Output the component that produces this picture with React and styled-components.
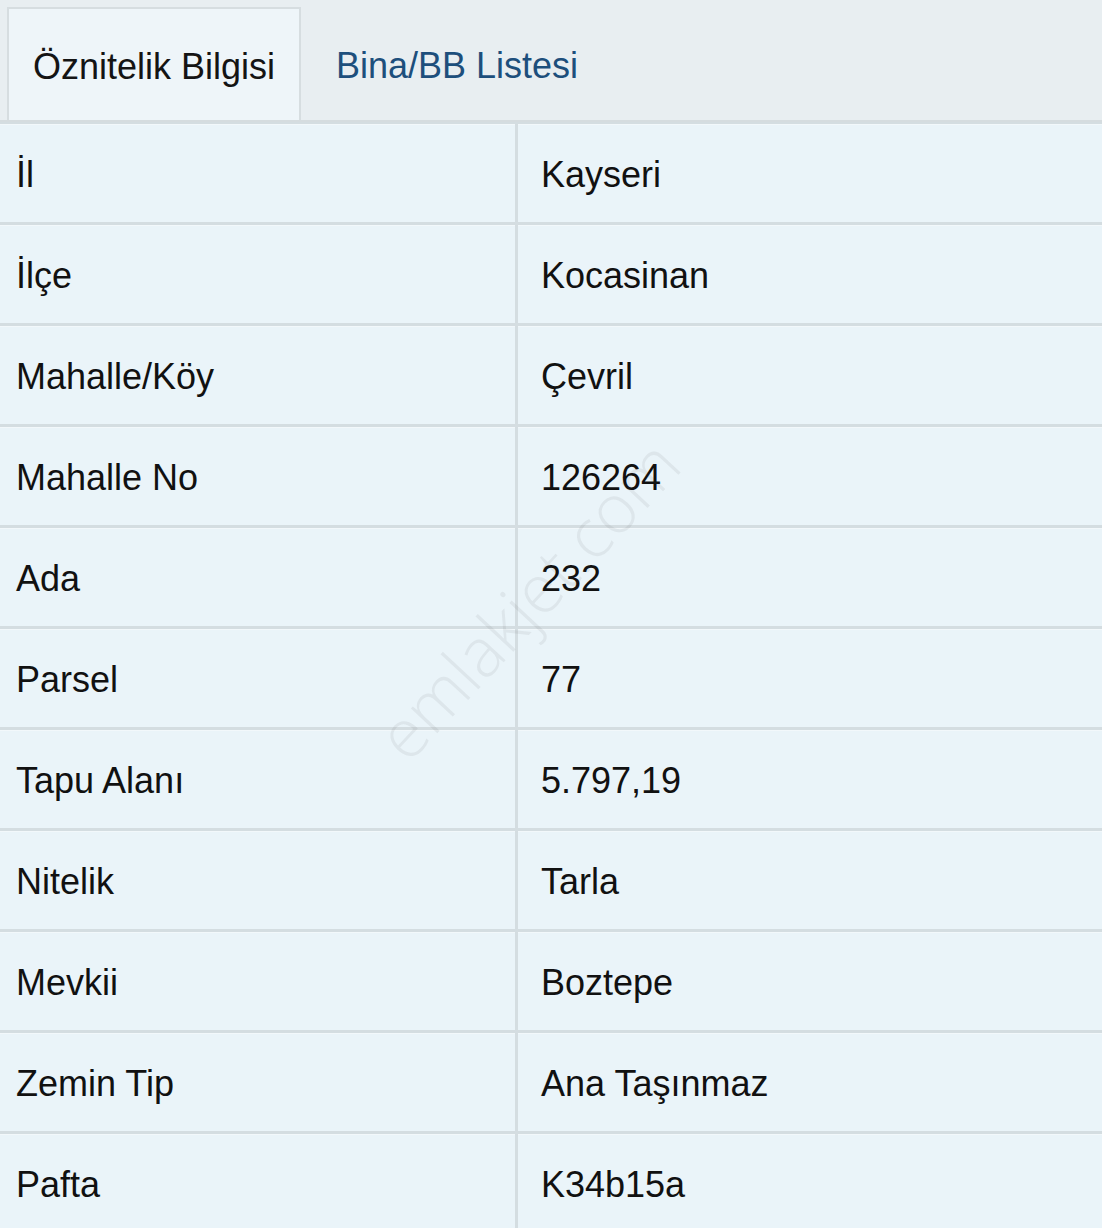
import React, { useState } from "react";
import styled, { createGlobalStyle } from "styled-components";

const GlobalStyle = createGlobalStyle`
	html, body {
		margin: 0;
		padding: 0;
		background: #eaf4f9;
	}
	body {
		font-family: "Liberation Sans", Arial, Helvetica, sans-serif;
	}
`

const Wrapper = styled.div`
	position: relative;
	width: 1102px;
	height: 1228px;
	overflow: hidden;
	background: #eaf4f9;
`

const TabBar = styled.div`
	display: flex;
	align-items: flex-end;
	height: 120px;
	padding-left: 7px;
	background: #e8eef1;
	border-bottom: 2px solid #d5dcdf;
`

const Tab = styled.button`
	display: flex;
	align-items: center;
	height: 113px;
	padding: ${props => props.active ? `4px 0 0 24px` : `4px 0 0 35px`};
	font-family: inherit;
	font-size: 36px;
	white-space: nowrap;
	color: ${props => props.active ? `#141414` : `#1d4f7c`};
	background: ${props => props.active ? `#eef5f9` : `transparent`};
	border: ${props => props.active ? `2px solid #d6dde0` : `none`};
	border-bottom: none;
	cursor: pointer;
	outline: none;
	box-sizing: border-box;
	width: ${props => props.active ? `294px` : `auto`};
`

const Table = styled.div`
	display: grid;
	grid-template-columns: 515px 1fr;
	gap: 3px;
	padding-top: 2px;
	background: #d4dde1;
`

const Cell = styled.div`
	display: flex;
	align-items: center;
	box-sizing: border-box;
	height: 98px;
	padding: 4px 0 0 ${props => props.value ? `23px` : `16px`};
	background: #eaf4f9;
	font-size: 36px;
	color: #111;
	box-shadow: inset 0 1px 0 #f2f8fb;
`

const Watermark = styled.div`
	position: absolute;
	left: 324px;
	top: 552px;
	font-size: 68px;
	font-weight: 300;
	font-family: "Open Sans", "Liberation Sans", sans-serif;
	color: rgba(60, 60, 60, 0.07);
	transform: rotate(-47deg);
	pointer-events: none;
	white-space: nowrap;
`

const rows = [
	["İl", "Kayseri"],
	["İlçe", "Kocasinan"],
	["Mahalle/Köy", "Çevril"],
	["Mahalle No", "126264"],
	["Ada", "232"],
	["Parsel", "77"],
	["Tapu Alanı", "5.797,19"],
	["Nitelik", "Tarla"],
	["Mevkii", "Boztepe"],
	["Zemin Tip", "Ana Taşınmaz"],
	["Pafta", "K34b15a"],
]

const App = () => {
	const [tab, setTab] = useState(0)
	return (
		<Wrapper>
			<GlobalStyle />
			<TabBar>
				<Tab active={tab === 0} onClick={() => setTab(0)}>Öznitelik Bilgisi</Tab>
				<Tab active={tab === 1} onClick={() => setTab(1)}>Bina/BB Listesi</Tab>
			</TabBar>
			<Table>
				{rows.map(([k, v]) => (
					<React.Fragment key={k}>
						<Cell>{k}</Cell>
						<Cell value>{v}</Cell>
					</React.Fragment>
				))}
			</Table>
			<Watermark>emlakjet.com</Watermark>
		</Wrapper>
	)
}

export default App
